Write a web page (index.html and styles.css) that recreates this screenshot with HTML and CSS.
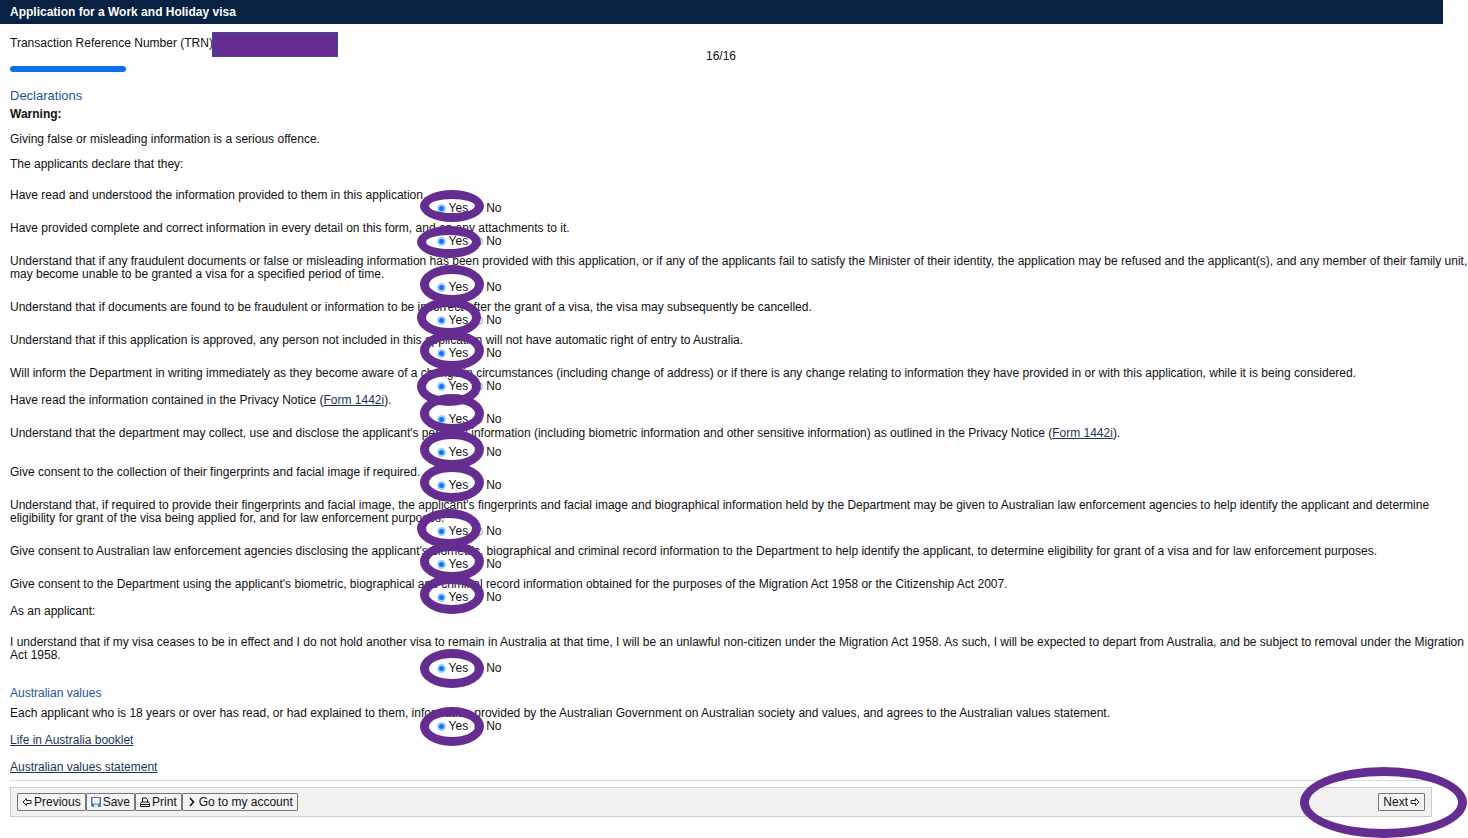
FILE: index.html
```html
<!DOCTYPE html>
<html lang="en">
<head>
  <meta charset="UTF-8" />
  <meta name="viewport" content="width=device-width, initial-scale=1" />
  <title>Application for a Work and Holiday visa</title>
  <link rel="stylesheet" href="styles.css">
</head>
<body>
  <div class="page">

    <header class="title-bar">
      <h1>Application for a Work and Holiday visa</h1>
    </header>

    <main>
      <div class="status">
        <div>
          <div class="trn">Transaction Reference Number (TRN):<span class="redacted"></span></div>
          <div class="progress"></div>
        </div>
        <div class="page-count">16/16</div>
      </div>

      <form>
        <h2>Declarations</h2>
        <p class="warning">Warning:</p>
        <p class="intro">Giving false or misleading information is a serious offence.</p>
        <p class="intro last">The applicants declare that they:</p>

        <fieldset>
          <legend>Have read and understood the information provided to them in this application.</legend>
          <div class="options">
            <label><input type="radio" name="q1" checked>Yes<span class="ring flat raised"></span></label>
            <label><input type="radio" name="q1">No</label>
          </div>
        </fieldset>

        <fieldset>
          <legend>Have provided complete and correct information in every detail on this form, and on any attachments to it.</legend>
          <div class="options">
            <label><input type="radio" name="q2" checked>Yes<span class="ring flat left"></span></label>
            <label><input type="radio" name="q2">No</label>
          </div>
        </fieldset>

        <fieldset>
          <legend>Understand that if any fraudulent documents or false or misleading information has been provided with this application, or if any of the applicants fail to satisfy the Minister of their identity, the application may be refused and the applicant(s), and any member of their family unit, may become unable to be granted a visa for a specified period of time.</legend>
          <div class="options">
            <label><input type="radio" name="q3" checked>Yes<span class="ring raised"></span></label>
            <label><input type="radio" name="q3">No</label>
          </div>
        </fieldset>

        <fieldset>
          <legend>Understand that if documents are found to be fraudulent or information to be incorrect after the grant of a visa, the visa may subsequently be cancelled.</legend>
          <div class="options">
            <label><input type="radio" name="q4" checked>Yes<span class="ring left raised"></span></label>
            <label><input type="radio" name="q4">No</label>
          </div>
        </fieldset>

        <fieldset>
          <legend>Understand that if this application is approved, any person not included in this application will not have automatic right of entry to Australia.</legend>
          <div class="options">
            <label><input type="radio" name="q5" checked>Yes<span class="ring raised"></span></label>
            <label><input type="radio" name="q5">No</label>
          </div>
        </fieldset>

        <fieldset class="tight">
          <legend>Will inform the Department in writing immediately as they become aware of a change in circumstances (including change of address) or if there is any change relating to information they have provided in or with this application, while it is being considered.</legend>
          <div class="options">
            <label><input type="radio" name="q6" checked>Yes<span class="ring left"></span></label>
            <label><input type="radio" name="q6">No</label>
          </div>
        </fieldset>

        <fieldset class="notice tight">
          <legend>Have read the information contained in the Privacy Notice (<a href="#">Form 1442i</a>).</legend>
          <div class="options">
            <label><input type="radio" name="q7" checked>Yes<span class="ring high"></span></label>
            <label><input type="radio" name="q7">No</label>
          </div>
        </fieldset>

        <fieldset class="notice">
          <legend>Understand that the department may collect, use and disclose the applicant's personal information (including biometric information and other sensitive information) as outlined in the Privacy Notice (<a href="#">Form 1442i</a>).</legend>
          <div class="options">
            <label><input type="radio" name="q8" checked>Yes<span class="ring raised"></span></label>
            <label><input type="radio" name="q8">No</label>
          </div>
        </fieldset>

        <fieldset>
          <legend>Give consent to the collection of their fingerprints and facial image if required.</legend>
          <div class="options">
            <label><input type="radio" name="q9" checked>Yes<span class="ring raised"></span></label>
            <label><input type="radio" name="q9">No</label>
          </div>
        </fieldset>

        <fieldset>
          <legend>Understand that, if required to provide their fingerprints and facial image, the applicant's fingerprints and facial image and biographical information held by the Department may be given to Australian law enforcement agencies to help identify the applicant and determine eligibility for grant of the visa being applied for, and for law enforcement purposes.</legend>
          <div class="options">
            <label><input type="radio" name="q10" checked>Yes<span class="ring left raised"></span></label>
            <label><input type="radio" name="q10">No</label>
          </div>
        </fieldset>

        <fieldset>
          <legend>Give consent to Australian law enforcement agencies disclosing the applicant's biometric, biographical and criminal record information to the Department to help identify the applicant, to determine eligibility for grant of a visa and for law enforcement purposes.</legend>
          <div class="options">
            <label><input type="radio" name="q11" checked>Yes<span class="ring raised"></span></label>
            <label><input type="radio" name="q11">No</label>
          </div>
        </fieldset>

        <fieldset class="tight">
          <legend>Give consent to the Department using the applicant's biometric, biographical and criminal record information obtained for the purposes of the Migration Act 1958 or the Citizenship Act 2007.</legend>
          <div class="options">
            <label><input type="radio" name="q12" checked>Yes<span class="ring raised"></span></label>
            <label><input type="radio" name="q12">No</label>
          </div>
        </fieldset>

        <p class="applicant">As an applicant:</p>

        <fieldset>
          <legend>I understand that if my visa ceases to be in effect and I do not hold another visa to remain in Australia at that time, I will be an unlawful non-citizen under the Migration Act 1958. As such, I will be expected to depart from Australia, and be subject to removal under the Migration Act 1958.</legend>
          <div class="options">
            <label><input type="radio" name="q13" checked>Yes<span class="ring"></span></label>
            <label><input type="radio" name="q13">No</label>
          </div>
        </fieldset>

        <h3>Australian values</h3>

        <fieldset class="tight">
          <legend>Each applicant who is 18 years or over has read, or had explained to them, information provided by the Australian Government on Australian society and values, and agrees to the Australian values statement.</legend>
          <div class="options">
            <label><input type="radio" name="q14" checked>Yes<span class="ring"></span></label>
            <label><input type="radio" name="q14">No</label>
          </div>
        </fieldset>

        <p class="link"><a href="#">Life in Australia booklet</a></p>
        <p class="link"><a href="#">Australian values statement</a></p>

        <div class="footer">
          <div class="actions">
            <button type="button">
              <svg width="10" height="10" viewBox="0 0 10 10"><path d="M1 5l3.500-3.500v2H9v3H4.500v2z" fill="none" stroke="#222"/></svg>
              Previous
            </button>
            <button type="button">
              <svg width="10" height="10" viewBox="0 0 10 10"><path d="M0 0h10v10H1.500L0 8.500z" fill="#4a7ab5"/><path d="M1.500 1h7v5.500h-7z" fill="#f4f8fc"/><path d="M3 7.500h4V10H3z" fill="#dfe9f5"/></svg>
              Save
            </button>
            <button type="button">
              <svg width="10" height="10" viewBox="0 0 10 10"><path d="M2.500 5V1h3.500l1.500 1.500V5M.5 9.500V6.500l1-1.500h7l1 1.500v3zM1 7.500h8" fill="none" stroke="#111"/></svg>
              Print
            </button>
            <button type="button">
              <svg width="10" height="10" viewBox="0 0 10 10"><path d="M3 1l3.500 4L3 9" fill="none" stroke="#111" stroke-width="1.600"/></svg>
              Go to my account
            </button>
            <button type="button" class="next">
              Next
              <svg width="10" height="10" viewBox="0 0 10 10"><path d="M9 5L5.500 1.500v2H1v3h4.500v2z" fill="none" stroke="#222"/></svg>
              <span class="ring large"></span>
            </button>
          </div>
        </div>
      </form>
    </main>

  </div>
</body>
</html>
```
FILE: styles.css
```css
body {
  margin: 0;
  background: #fefefe;
  color: #111;
  font-family: Arial, "Liberation Sans", sans-serif;
  font-size: 12px;
  line-height: 13px;
}
.page {
  margin-right: 25px;
  padding-bottom: 21px;
}
.title-bar {
  background: #092143;
  padding: 0 10px;
}
h1 {
  margin: 0;
  color: #fff;
  font-size: 12px;
  line-height: 24px;
}
main {
  padding: 0 11px 0 10px;
}

/* Reference number, progress and page count */
.status {
  display: grid;
  grid-template-columns: 1fr auto 1fr;
  padding-top: 8px;
}
.trn {
  display: flex;
  line-height: 22px;
}
.redacted {
  width: 124px;
  height: 23px;
  margin-left: -4px;
  border: 1px solid #41479b;
  background: #662d91;
}
.progress {
  width: 116px;
  height: 6px;
  margin-top: 9px;
  border-radius: 3px;
  background: #0b6fe8;
}
.page-count {
  padding-top: 18px;
}

/* Headings and intro text */
h2,
h3 {
  margin: 0;
  color: #1d5594;
  font-weight: normal;
}
h2 {
  margin-top: 16px;
  font-size: 13px;
  line-height: 16px;
}
h3 {
  margin: 12px 0 7px;
  font-size: 12px;
}
p {
  margin: 0;
}
.warning {
  margin-top: 4px;
  font-weight: bold;
}
.intro {
  margin-top: 12px;
}
.intro.last {
  margin-bottom: 18px;
}
.applicant {
  margin-bottom: 18px;
}
.link {
  margin-bottom: 14px;
}
a {
  color: #1c3557;
}

/* Yes / No questions */
fieldset {
  min-width: 0;
  margin: 0 0 7px;
  padding: 0;
  border: 0;
}
fieldset.tight {
  margin-bottom: 1px;
}
fieldset.notice .options {
  margin-top: 6px;
}
/* long questions run on into the right margin of the page */
legend {
  margin-right: -36px;
  padding: 0;
}
.options {
  display: flex;
  gap: 6px;
  padding-left: 30%;
}
label {
  position: relative;
  display: flex;
  align-items: center;
  gap: 3px;
}
input[type="radio"] {
  appearance: none;
  width: 9px;
  height: 9px;
  margin: 0;
  border: 1px solid #999;
  border-radius: 50%;
  background: #fff;
}
input[type="radio"]:checked {
  border: 2px solid #a5cffb;
  background: #0d74f5;
}

/* Purple highlight drawn over an answer */
.ring {
  position: absolute;
  z-index: 1;
  top: -13px;
  left: -17px;
  box-sizing: border-box;
  width: 64px;
  height: 39px;
  border: 9px solid #662d91;
  border-radius: 50%;
  pointer-events: none;
}
.ring.flat {
  top: -9px;
  height: 32px;
}
.ring.left {
  left: -20px;
}
.ring.raised {
  margin-top: -3px;
}
.ring.high {
  margin-top: -6px;
}
.ring.large {
  top: -27px;
  left: -79px;
  width: 167px;
  height: 71px;
}

/* Bottom button bar */
.footer {
  margin-top: -8px;
  padding-top: 6px;
  border-top: 1px solid #ddd;
}
.actions {
  display: flex;
  padding: 5px 6px;
  border: 1px solid #ccc;
  background: #f1f1f1;
}
button {
  position: relative;
  display: flex;
  align-items: center;
  gap: 2px;
  height: 18px;
  padding: 0 4px;
  border: 1px solid #777;
  border-radius: 1px;
  background: #f4f4f4;
  color: #111;
  font: inherit;
}
.next {
  margin-left: auto;
}
```
